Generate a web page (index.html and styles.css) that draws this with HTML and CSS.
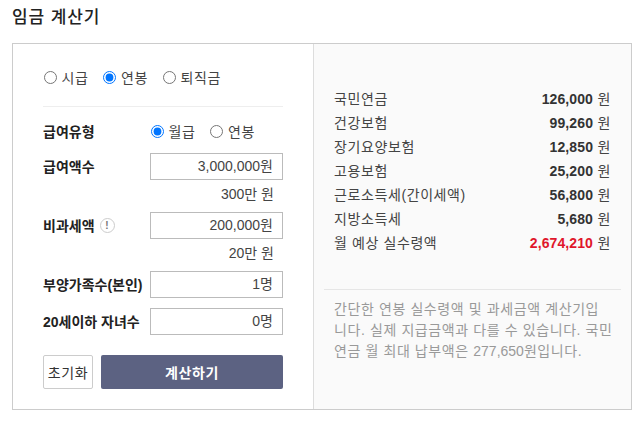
FILE: index.html
```html
<!DOCTYPE html>
<html lang="ko">
<head>
  <meta charset="UTF-8">
  <meta name="viewport" content="width=device-width, initial-scale=1.0">
  <title>임금 계산기</title>
  <link rel="stylesheet" href="styles.css">
</head>
<body>
  <h1 class="page-title">임금 계산기</h1>
  <div class="calc-box">
    <form class="calc-form">
      <div class="radio-group type-row">
        <label class="radio"><input type="radio" name="kind">시급</label>
        <label class="radio"><input type="radio" name="kind" checked>연봉</label>
        <label class="radio"><input type="radio" name="kind">퇴직금</label>
      </div>

      <div class="form-row pay-type">
        <span class="form-label">급여유형</span>
        <div class="radio-group">
          <label class="radio"><input type="radio" name="payType" checked>월급</label>
          <label class="radio"><input type="radio" name="payType">연봉</label>
        </div>
      </div>

      <div class="form-row">
        <span class="form-label">급여액수</span>
        <div class="amount-box">3,000,000원</div>
      </div>
      <div class="amount-hint">300만 원</div>

      <div class="form-row">
        <span class="form-label">비과세액<span class="info-icon">!</span></span>
        <div class="amount-box">200,000원</div>
      </div>
      <div class="amount-hint">20만 원</div>

      <div class="form-row">
        <span class="form-label">부양가족수(본인)</span>
        <div class="amount-box">1명</div>
      </div>

      <div class="form-row child-row">
        <span class="form-label">20세이하 자녀수</span>
        <div class="amount-box">0명</div>
      </div>

      <div class="button-row">
        <button type="button" class="btn-reset">초기화</button>
        <button type="button" class="btn-submit">계산하기</button>
      </div>
    </form>

    <div class="calc-result">
      <ul class="result-list">
        <li><span>국민연금</span><span><b>126,000</b> 원</span></li>
        <li><span>건강보험</span><span><b>99,260</b> 원</span></li>
        <li><span>장기요양보험</span><span><b>12,850</b> 원</span></li>
        <li><span>고용보험</span><span><b>25,200</b> 원</span></li>
        <li><span>근로소득세(간이세액)</span><span><b>56,800</b> 원</span></li>
        <li><span>지방소득세</span><span><b>5,680</b> 원</span></li>
        <li><span>월 예상 실수령액</span><span><b class="total">2,674,210</b> 원</span></li>
      </ul>
      <p class="result-note">간단한 연봉 실수령액 및 과세금액 계산기입<br>니다. 실제 지급금액과 다를 수 있습니다. 국민<br>연금 월 최대 납부액은 <span class="note-num">277,650</span>원입니다.</p>
    </div>
  </div>
</body>
</html>
```

FILE: styles.css
```css
* {
  box-sizing: border-box;
}

body {
  margin: 0;
  background-color: #fff;
  color: #333;
  font-family: 'Liberation Sans', 'Noto Sans CJK KR', sans-serif;
  font-size: 14px;
  letter-spacing: 0.6px;
}

.page-title {
  margin: 0;
  padding: 8px 12px 0;
  height: 43px;
  font-size: 17px;
  line-height: 20px;
  font-weight: 500;
  letter-spacing: 0.9px;
  color: #222;
}

.calc-box {
  display: flex;
  width: 620px;
  height: 367px;
  margin-left: 12px;
  border: 1px solid #ccc;
}

.calc-form {
  flex: none;
  width: 300px;
  padding: 0 30px;
}

.radio-group {
  display: flex;
  align-items: center;
  gap: 15px;
}

.radio {
  display: flex;
  align-items: center;
  color: #444;
  line-height: 20px;
}

.radio input {
  width: 13px;
  height: 13px;
  margin: 0 4.5px 0 0;
  accent-color: #0075ff;
}

.type-row {
  height: 63px;
  padding: 5px 0 0 1px;
  border-bottom: 1px solid #eee;
}

.form-row {
  display: flex;
  align-items: center;
  justify-content: space-between;
  height: 27px;
}

.pay-type {
  margin-top: 11px;
  margin-bottom: 8px;
}

.pay-type .radio-group {
  width: 133px;
  padding-left: 1px;
}

.form-label {
  display: flex;
  align-items: center;
  padding-bottom: 2px;
  font-weight: 700;
  letter-spacing: 0;
  color: #222;
  white-space: nowrap;
}

.info-icon {
  width: 15px;
  height: 15px;
  margin: 2px 0 0 5px;
  border: 1px solid #ccc;
  border-radius: 50%;
  font-size: 10px;
  line-height: 13px;
  text-align: center;
  color: #777;
}

.amount-box {
  width: 133px;
  height: 27px;
  padding-right: 9px;
  border: 1px solid #bbb;
  line-height: 25px;
  text-align: right;
  color: #444;
  letter-spacing: 0;
}

.amount-hint {
  height: 32px;
  padding-right: 9px;
  line-height: 28px;
  text-align: right;
  color: #444;
  letter-spacing: 0;
}

.child-row {
  margin-top: 10px;
}

.button-row {
  display: flex;
  gap: 8px;
  margin-top: 20px;
}

.btn-reset {
  width: 50px;
  height: 34px;
  padding: 0;
  background-color: #fff;
  border: 1px solid #ccc;
  border-radius: 2px;
  color: #333;
  font: inherit;
  letter-spacing: inherit;
}

.btn-submit {
  flex: 1;
  height: 34px;
  background-color: #5c6282;
  border: none;
  border-radius: 2px;
  color: #fff;
  font: inherit;
  font-weight: 700;
  letter-spacing: inherit;
}

.calc-result {
  flex: 1;
  min-width: 0;
  padding: 0 10px;
  background-color: #fafafa;
  border-left: 1px solid #ddd;
}

.result-list {
  margin: 0;
  padding: 43px 10px 0;
  list-style: none;
}

.result-list li {
  display: flex;
  justify-content: space-between;
  height: 24px;
  line-height: 24px;
  color: #444;
}

.result-list b {
  color: #333;
  letter-spacing: 0.1px;
}

.result-list .total {
  color: #e0162b;
}

.result-note {
  margin: 34px 0 0;
  padding: 9px 10px 0;
  border-top: 1px solid #e6e6e6;
  line-height: 21px;
  color: #999;
  white-space: nowrap;
}

.note-num {
  letter-spacing: 0;
}
```
